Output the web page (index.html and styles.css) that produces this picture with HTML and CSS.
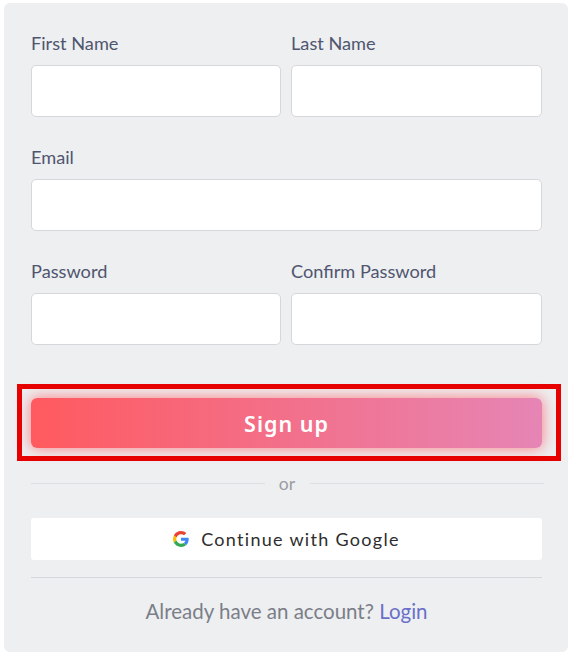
FILE: index.html
```html
<!DOCTYPE html>
<html>
<head>
  <title>Sign up</title>
  <link rel="stylesheet" href="styles.css">
</head>
<body>
  <div class="card">
    <form class="fields">
      <div class="field">
        <label>First Name</label>
        <input type="text">
      </div>
      <div class="field">
        <label>Last Name</label>
        <input type="text">
      </div>
      <div class="field wide">
        <label>Email</label>
        <input type="text">
      </div>
      <div class="field">
        <label>Password</label>
        <input type="password">
      </div>
      <div class="field">
        <label>Confirm Password</label>
        <input type="password">
      </div>
    </form>
    <div class="signup-wrap">
      <button class="signup-btn">Sign up</button>
      <div class="highlight"></div>
    </div>
    <div class="or-row">
      <span class="or-line"></span>
      <span class="or-text">or</span>
      <span class="or-line"></span>
    </div>
    <button class="google-btn">
      <svg class="google-icon" viewBox="0 0 48 48">
        <path fill="#EA4335" d="M24 9.5c3.54 0 6.71 1.22 9.21 3.6l6.85-6.85C35.9 2.38 30.47 0 24 0 14.62 0 6.51 5.38 2.56 13.22l7.98 6.19C12.43 13.72 17.74 9.5 24 9.5z"/>
        <path fill="#4285F4" d="M46.98 24.55c0-1.57-.15-3.09-.38-4.55H24v9.02h12.94c-.58 2.96-2.26 5.48-4.78 7.18l7.73 6c4.51-4.18 7.09-10.36 7.09-17.65z"/>
        <path fill="#FBBC05" d="M10.53 28.59c-.48-1.45-.76-2.99-.76-4.59s.27-3.14.76-4.59l-7.98-6.19C.92 16.46 0 20.12 0 24c0 3.88.92 7.54 2.56 10.78l7.97-6.19z"/>
        <path fill="#34A853" d="M24 48c6.48 0 11.93-2.13 15.89-5.81l-7.73-6c-2.15 1.45-4.92 2.3-8.16 2.3-6.26 0-11.57-4.22-13.47-9.91l-7.98 6.19C6.51 42.62 14.62 48 24 48z"/>
      </svg>
      Continue with Google
    </button>
    <div class="login-row">Already have an account? <a href="#">Login</a></div>
  </div>
</body>
</html>
```
FILE: styles.css
```css
html, body {
  margin: 0;
  padding: 0;
  background: #fff;
  font-family: 'Lato', sans-serif;
}
.card {
  box-sizing: border-box;
  width: 564px;
  height: 649px;
  margin: 3px 0 0 4px;
  padding: 29px 26px 0 27px;
  background: #edeff1;
  border-radius: 6px;
}
.fields {
  display: grid;
  grid-template-columns: 250px 251px;
  column-gap: 10px;
  row-gap: 29px;
}
.field.wide {
  grid-column: 1 / 3;
}
.field label {
  display: block;
  height: 24px;
  margin-bottom: 9px;
  font-size: 18.2px;
  line-height: 23px;
  color: #50556f;
}
.field input {
  display: block;
  box-sizing: border-box;
  width: 100%;
  height: 52px;
  background: #fff;
  border: 1px solid #d5d7dc;
  border-radius: 5px;
  outline: none;
}
.signup-wrap {
  position: relative;
  margin-top: 53px;
}
.signup-btn {
  display: block;
  width: 100%;
  height: 50px;
  border: none;
  border-radius: 6px;
  background: linear-gradient(90deg, #ff5a5f, #e685b5);
  box-shadow: 0 0 14px 1px rgba(255, 90, 95, 0.7);
  color: #fff;
  font-family: 'Noto Sans', sans-serif;
  font-size: 21.5px;
  font-weight: 600;
  letter-spacing: 1px;
}
.highlight {
  position: absolute;
  top: -14px;
  left: -14px;
  right: -19px;
  bottom: -13px;
  border: 5px solid #e60000;
}
.or-row {
  display: flex;
  align-items: center;
  width: 513px;
  margin-top: 25px;
  height: 20px;
}
.or-line {
  flex: 1;
  height: 1px;
  background: #dcdee3;
}
.or-text {
  padding: 0 15px 0 14px;
  font-size: 17.5px;
  color: #9a9da3;
}
.google-btn {
  display: flex;
  align-items: center;
  justify-content: center;
  width: 100%;
  height: 42px;
  margin-top: 25px;
  border: none;
  border-radius: 3px;
  background: #fff;
  color: #2d2d2d;
  font-family: 'Lato', sans-serif;
  font-size: 18px;
  letter-spacing: 1.3px;
}
.google-icon {
  width: 16px;
  height: 16px;
  margin-right: 12px;
}
.login-row {
  margin-top: 17px;
  padding-top: 21px;
  border-top: 1px solid #d5d7dc;
  text-align: center;
  font-size: 20.5px;
  line-height: 24px;
  color: #7b7e88;
}
.login-row a {
  color: #6a6fc9;
  text-decoration: none;
}
```
